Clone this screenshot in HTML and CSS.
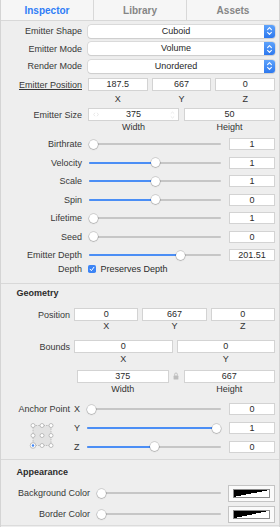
FILE: index.html
```html
<!DOCTYPE html>
<html>
<head>
<meta charset="utf-8">
<link rel="stylesheet" href="styles.css">
</head>
<body>
<div class="panel">
  <div class="tabs">
    <div class="tab active">Inspector</div>
    <div class="tab">Library</div>
    <div class="tab">Assets</div>
  </div>

  <section class="s1">
    <div class="row prow">
      <div class="lbl">Emitter Shape</div>
      <div class="popup"><span class="pv">Cuboid</span><span class="pa"><svg width="7" height="10" viewBox="0 0 7 10"><path d="M1.6 3.6 L3.5 1.7 L5.4 3.6 M1.6 6.4 L3.5 8.3 L5.4 6.4" fill="none" stroke="#fff" stroke-width="1.1" stroke-linecap="round" stroke-linejoin="round"/></svg></span></div>
    </div>
    <div class="row prow">
      <div class="lbl">Emitter Mode</div>
      <div class="popup"><span class="pv">Volume</span><span class="pa"><svg width="7" height="10" viewBox="0 0 7 10"><path d="M1.6 3.6 L3.5 1.7 L5.4 3.6 M1.6 6.4 L3.5 8.3 L5.4 6.4" fill="none" stroke="#fff" stroke-width="1.1" stroke-linecap="round" stroke-linejoin="round"/></svg></span></div>
    </div>
    <div class="row prow">
      <div class="lbl">Render Mode</div>
      <div class="popup"><span class="pv">Unordered</span><span class="pa"><svg width="7" height="10" viewBox="0 0 7 10"><path d="M1.6 3.6 L3.5 1.7 L5.4 3.6 M1.6 6.4 L3.5 8.3 L5.4 6.4" fill="none" stroke="#fff" stroke-width="1.1" stroke-linecap="round" stroke-linejoin="round"/></svg></span></div>
    </div>

    <div class="row frow pos1">
      <div class="lbl"><span class="ul">Emitter Position</span></div>
      <div class="ctl g3">
        <div class="field">187.5</div><div class="field">667</div><div class="field">0</div>
      </div>
    </div>
    <div class="row subrow">
      <div class="lbl"></div>
      <div class="ctl g3 subs"><span>X</span><span>Y</span><span>Z</span></div>
    </div>

    <div class="row frow size1">
      <div class="lbl">Emitter Size</div>
      <div class="ctl g2">
        <div class="field stepf">375
          <svg class="st-l" width="6" height="5" viewBox="0 0 6 5"><path d="M2 0.8 L0.6 2.5 L2 4.2 M4 0.8 L5.4 2.5 L4 4.2" fill="none" stroke="#e3e3e3" stroke-width="0.8"/></svg>
          <svg class="st-r" width="5" height="8" viewBox="0 0 5 8"><path d="M0.8 2.6 L2.5 1 L4.2 2.6 M0.8 5.4 L2.5 7 L4.2 5.4" fill="none" stroke="#e3e3e3" stroke-width="0.8"/></svg>
        </div>
        <div class="field">50</div>
      </div>
    </div>
    <div class="row subrow sub2">
      <div class="lbl"></div>
      <div class="ctl g2 subs"><span>Width</span><span>Height</span></div>
    </div>

    <div class="sliders">
      <div class="row srow"><div class="lbl">Birthrate</div><div class="slider" style="--v:0"><div class="fill"></div><div class="thumb"></div></div><div class="field val">1</div></div>
      <div class="row srow"><div class="lbl">Velocity</div><div class="slider" style="--v:0.5"><div class="fill"></div><div class="thumb"></div></div><div class="field val">1</div></div>
      <div class="row srow"><div class="lbl">Scale</div><div class="slider" style="--v:0.5"><div class="fill"></div><div class="thumb"></div></div><div class="field val">1</div></div>
      <div class="row srow"><div class="lbl">Spin</div><div class="slider" style="--v:0.5"><div class="fill"></div><div class="thumb"></div></div><div class="field val">0</div></div>
      <div class="row srow"><div class="lbl">Lifetime</div><div class="slider" style="--v:0"><div class="fill"></div><div class="thumb"></div></div><div class="field val">1</div></div>
      <div class="row srow"><div class="lbl">Seed</div><div class="slider" style="--v:0"><div class="fill"></div><div class="thumb"></div></div><div class="field val">0</div></div>
      <div class="row srow"><div class="lbl">Emitter Depth</div><div class="slider" style="--v:0.707"><div class="fill"></div><div class="thumb"></div></div><div class="field val">201.51</div></div>
    </div>

    <div class="row drow">
      <div class="lbl">Depth</div>
      <div class="chk">
        <svg width="8" height="8" viewBox="0 0 8 8"><rect width="8" height="8" rx="1.8" fill="#3c84f5"/><path d="M2.1 4.2 L3.4 5.7 L5.9 2.3" fill="none" stroke="#fff" stroke-width="1" stroke-linecap="round" stroke-linejoin="round"/></svg>
        <span>Preserves Depth</span>
      </div>
    </div>
  </section>

  <section class="geo">
    <div class="head">Geometry</div>

    <div class="row frow gpos">
      <div class="lbl">Position</div>
      <div class="ctl g3">
        <div class="field">0</div><div class="field">667</div><div class="field">0</div>
      </div>
    </div>
    <div class="row subrow">
      <div class="lbl"></div>
      <div class="ctl g3 subs"><span>X</span><span>Y</span><span>Z</span></div>
    </div>

    <div class="row frow gbounds">
      <div class="lbl">Bounds</div>
      <div class="ctl g2">
        <div class="field">0</div><div class="field">0</div>
      </div>
    </div>
    <div class="row subrow sub2">
      <div class="lbl"></div>
      <div class="ctl g2 subs"><span>X</span><span>Y</span></div>
    </div>

    <div class="row frow gsize">
      <div class="lbl"></div>
      <div class="ctl gl">
        <div class="field">375</div>
        <div class="lock"><svg width="6" height="8" viewBox="0 0 6 8"><path d="M1.6 3.6 V2.4 a1.4 1.4 0 0 1 2.8 0 V3.6" fill="none" stroke="#bdbdbd" stroke-width="0.9"/><rect x="0.6" y="3.6" width="4.8" height="4" rx="0.6" fill="#bdbdbd"/></svg></div>
        <div class="field">667</div>
      </div>
    </div>
    <div class="row subrow sub2">
      <div class="lbl"></div>
      <div class="ctl gl subs"><span>Width</span><span></span><span>Height</span></div>
    </div>

    <div class="anchor">
      <div class="alabel">Anchor Point</div>
      <svg class="awidget" width="26" height="27" viewBox="0 0 26 27">
        <rect x="4" y="3.5" width="18" height="20" fill="#e2e2e2" stroke="#acacac" stroke-width="0.7" stroke-dasharray="1.6 1"/>
        <g fill="#fff" stroke="#a6a6a6" stroke-width="0.7">
          <circle cx="4" cy="3.5" r="2"/><circle cx="13" cy="3.5" r="2"/><circle cx="22" cy="3.5" r="2"/>
          <circle cx="4" cy="13.5" r="2"/><circle cx="13" cy="13.5" r="2"/><circle cx="22" cy="13.5" r="2"/>
          <circle cx="13" cy="23.5" r="2"/><circle cx="22" cy="23.5" r="2"/>
          <circle cx="4" cy="23.5" r="2.8"/>
        </g>
        <circle cx="4" cy="23.5" r="1.2" fill="#3c84f5"/>
      </svg>
      <div class="arow"><span class="ax">X</span><div class="slider as" style="--v:0"><div class="fill"></div><div class="thumb"></div></div><div class="field val">0</div></div>
      <div class="arow"><span class="ax">Y</span><div class="slider as" style="--v:1"><div class="fill"></div><div class="thumb"></div></div><div class="field val">1</div></div>
      <div class="arow"><span class="ax">Z</span><div class="slider as" style="--v:0.5"><div class="fill"></div><div class="thumb"></div></div><div class="field val">0</div></div>
    </div>
  </section>

  <section class="app">
    <div class="head">Appearance</div>
    <div class="row crow">
      <div class="lbl">Background Color</div>
      <div class="slider cs" style="--v:0"><div class="fill"></div><div class="thumb"></div></div>
      <div class="well"><div class="sw"></div></div>
    </div>
    <div class="row crow">
      <div class="lbl">Border Color</div>
      <div class="slider cs" style="--v:0"><div class="fill"></div><div class="thumb"></div></div>
      <div class="well"><div class="sw"></div></div>
    </div>
  </section>
</div>
</body>
</html>
```

FILE: styles.css
```css
* { box-sizing: border-box; margin: 0; padding: 0; }

body {
  margin: 0;
  background: #eeeeee;
  font-family: "Liberation Sans", Arial, sans-serif;
  font-size: 9px;
  color: #333333;
}

.panel {
  width: 280px;
  height: 527px;
  background: #eeeeee;
  border-left: 1px solid #d4d4d4;
  border-right: 1px solid #d4d4d4;
  overflow: hidden;
}

/* tabs */
.tabs {
  display: flex;
  height: 21px;
  background: #f6f6f6;
  border-bottom: 1px solid #d8d8d8;
}
.tab {
  flex: 1;
  display: flex;
  align-items: center;
  justify-content: center;
  font-size: 10px;
  font-weight: bold;
  color: #858585;
  border-left: 1px solid #d8d8d8;
}
.tab:first-child { border-left: 0; }
.tab.active { color: #2f7df6; }

/* generic rows */
.row { display: flex; align-items: center; }
.lbl { flex: none; text-align: right; white-space: nowrap; color: #383838; }
.ctl { flex: 1; }
.ul { text-decoration: underline; }

.g3 { display: grid; grid-template-columns: 1fr 1fr 1fr; column-gap: 4px; }
.g2 { display: grid; grid-template-columns: 1fr 1fr; column-gap: 5px; }
.gl { display: grid; grid-template-columns: 1fr 15px 1fr; padding-left: 3px; }

.field {
  position: relative;
  height: 13px;
  background: #ffffff;
  border: 1px solid #d3d3d3;
  text-align: center;
  line-height: 11px;
  color: #2b2b2b;
}
.subs span { text-align: center; line-height: 11px; color: #333; }

/* section 1 */
.s1 { padding: 1.5px 4px 9px 0; }
.s1 .lbl { width: 81px; margin-right: 6px; }

.prow { height: 17.5px; }
.popup {
  flex: 1;
  display: flex;
  height: 13px;
  background: #ffffff;
  border-radius: 3px;
  box-shadow: 0 0 0 0.5px #c9c9c9, 0 0.5px 1px rgba(0,0,0,0.12);
}
.pv { flex: 1; text-align: center; line-height: 13px; color: #262626; }
.pa {
  width: 11px;
  display: flex;
  align-items: center;
  justify-content: center;
  background: linear-gradient(#5da2fb, #2d78ee);
  border-radius: 0 3px 3px 0;
}

.pos1 { margin-top: 3px; }
.subrow .lbl { height: 11px; }
.s1 .subrow { margin-top: 3px; }
.size1 { margin-top: 3px; }
.s1 .sub2 { margin-top: 1px; }

.stepf .st-l { position: absolute; left: 4px; top: 3px; }
.stepf .st-r { position: absolute; right: 3px; top: 1.5px; }

.sliders { margin-top: 1.75px; }
.srow { height: 18.5px; }

.slider {
  position: relative;
  flex: none;
  width: 132px;
  height: 9px;
  margin-left: 1px;
}
.slider::before {
  content: "";
  position: absolute;
  left: 0;
  right: 0;
  top: 3.5px;
  height: 2px;
  border-radius: 1px;
  background: #c6c6c6;
}
.fill {
  position: absolute;
  left: 0;
  top: 3.5px;
  height: 2px;
  border-radius: 1px;
  background: #4b8ef5;
  width: calc(var(--v) * (100% - 9px) + 4.5px);
}
.thumb {
  position: absolute;
  top: 0;
  left: calc(var(--v) * (100% - 9px));
  width: 9px;
  height: 9px;
  border-radius: 50%;
  background: #ffffff;
  box-shadow: 0 0 0 0.5px rgba(0,0,0,0.22), 0 0.6px 1.2px rgba(0,0,0,0.28);
}
.val {
  flex: none;
  width: 46px;
  height: 12px;
  line-height: 10px;
  margin-left: 8px;
}

.drow { height: 10px; }
.chk { display: flex; align-items: center; gap: 4.5px; color: #2b2b2b; }
.chk svg { display: block; }

/* headings */
.head {
  padding-left: 15.5px;
  font-weight: bold;
  line-height: 11px;
  color: #2b2b2b;
}

/* geometry */
.geo {
  border-top: 1px solid #d8d8d8;
  padding: 4px 4px 2.9px 0;
}
.geo .lbl { width: 69px; margin-right: 4px; }
.geo .g2 { column-gap: 4px; }
.gpos { margin-top: 9px; }
.gbounds { margin-top: 8px; }
.geo .sub2 { margin-top: 1px; }
.gsize { margin-top: 4.75px; }
.lock { display: flex; justify-content: center; align-items: center; padding-bottom: 1px; }

.anchor {
  margin-top: 5px;
  display: grid;
  grid-template-columns: 69px 1fr;
  grid-template-rows: repeat(3, 18.7px);
  column-gap: 4px;
}
.alabel {
  grid-column: 1;
  grid-row: 1;
  align-self: center;
  text-align: right;
  white-space: nowrap;
  color: #383838;
}
.awidget {
  grid-column: 1;
  grid-row: 2 / 4;
  margin-left: 27.5px;
  margin-top: 3px;
  display: block;
}
.arow {
  grid-column: 2;
  display: flex;
  align-items: center;
}
.ax { width: 13px; color: #333; }
.slider.as { width: 134px; margin-left: 0; }

/* appearance */
.app {
  border-top: 1px solid #d8d8d8;
  border-bottom: 1px solid #dcdcdc;
  padding: 6.8px 4px 0 0;
}
.app .lbl { width: 89px; margin-right: 7px; }
.app .head { margin-bottom: 5px; }
.crow { height: 21px; }
.slider.cs { width: 124px; margin-left: 0; }
.well {
  flex: none;
  width: 47px;
  height: 17px;
  margin-left: 7px;
  padding: 3px 4px;
  background: #fafafa;
  border: 1px solid #c4c4c4;
}
.sw {
  height: 100%;
  border: 0.5px solid #8a8a8a;
  background: linear-gradient(to bottom right, #000 50%, #fff 50%);
}
```
